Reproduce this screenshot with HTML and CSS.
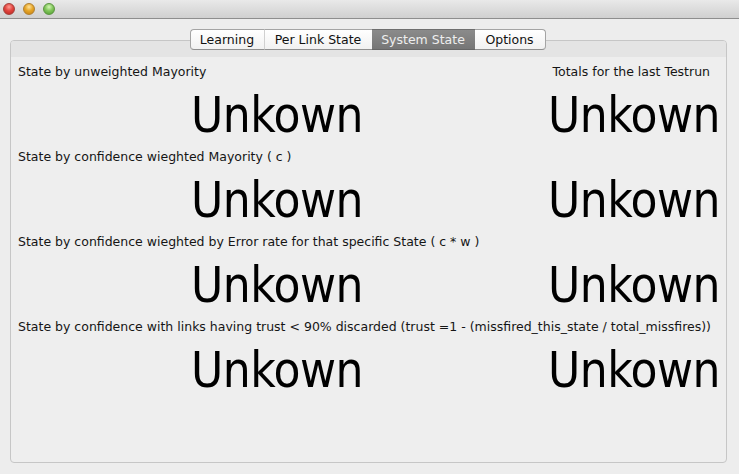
FILE: index.html
```html
<!DOCTYPE html>
<html>
<head>
<meta charset="utf-8">
<link rel="stylesheet" href="styles.css">
</head>
<body>
<div class="titlebar">
  <span class="light red"></span>
  <span class="light yellow"></span>
  <span class="light green"></span>
</div>
<div class="window">
  <div class="tabs">
    <div class="tab first">Learning</div>
    <div class="tab sep">Per Link State</div>
    <div class="tab selected">System State</div>
    <div class="tab last">Options</div>
  </div>
  <div class="panel">
    <div class="band"></div>
    <div class="content">
      <div class="label">State by unweighted Mayority</div>
      <div class="label right">Totals for the last Testrun</div>
      <div class="big left">Unkown</div>
      <div class="big">Unkown</div>

      <div class="label full">State by confidence wieghted Mayority ( c )</div>
      <div class="big left">Unkown</div>
      <div class="big">Unkown</div>

      <div class="label full">State by confidence wieghted by Error rate for that specific State ( c * w )</div>
      <div class="big left">Unkown</div>
      <div class="big">Unkown</div>

      <div class="label full">State by confidence with links having trust &lt; 90% discarded (trust =1 - (missfired_this_state / total_missfires))</div>
      <div class="big left">Unkown</div>
      <div class="big">Unkown</div>
    </div>
  </div>
</div>
</body>
</html>
```

FILE: styles.css
```css
html, body {
  margin: 0;
  padding: 0;
}
body {
  width: 739px;
  height: 474px;
  background: #ededed;
  font-family: "DejaVu Sans", sans-serif;
  color: #111;
  overflow: hidden;
}
.titlebar {
  height: 18px;
  background: linear-gradient(#e9e9e9, #d0d0d0);
  border-bottom: 1px solid #8e8e8e;
  display: flex;
  align-items: center;
  gap: 8px;
  padding-left: 3px;
}
.light {
  width: 12px;
  height: 12px;
  border-radius: 50%;
  box-sizing: border-box;
}
.red {
  background: radial-gradient(circle at 50% 30%, #ff9a92 0%, #e2453f 45%, #b8241f 100%);
  border: 1px solid #a3403a;
}
.yellow {
  background: radial-gradient(circle at 50% 30%, #ffe39a 0%, #e6a628 45%, #c27d10 100%);
  border: 1px solid #b08030;
}
.green {
  background: radial-gradient(circle at 50% 30%, #d4f7b4 0%, #82c65c 45%, #4e9a2e 100%);
  border: 1px solid #5b9440;
}
.window {
  display: flex;
  flex-direction: column;
  padding: 10px 12px 0 10px;
}
.tabs {
  display: flex;
  align-self: center;
  margin-left: -2px;
  height: 21px;
  position: relative;
  z-index: 1;
  font-size: 12.5px;
}
.tab {
  display: flex;
  align-items: center;
  justify-content: center;
  box-sizing: border-box;
  height: 21px;
  background: linear-gradient(#ffffff, #f1f1f1);
  border-top: 1px solid #a4a4a4;
  border-bottom: 1px solid #8f8f8f;
  color: #111;
}
.tab.first {
  width: 74px;
  border-left: 1px solid #a4a4a4;
  border-radius: 4px 0 0 4px;
}
.tab.sep {
  width: 108px;
  border-left: 1px solid #d0d0d0;
}
.tab.selected {
  width: 103px;
  background: linear-gradient(#8b8b8b, #767676);
  border-top-color: #6e6e6e;
  border-bottom-color: #666;
  color: #eeeeee;
}
.tab.last {
  width: 71px;
  border-right: 1px solid #a4a4a4;
  border-radius: 0 4px 4px 0;
}
.panel {
  margin-top: -10px;
  height: 423px;
  box-sizing: border-box;
  border: 1px solid #c6c6c6;
  border-radius: 4px;
  background: #eeeeee;
  display: flex;
  flex-direction: column;
}
.band {
  height: 16px;
  background: #e4e4e4;
  border-radius: 3px 3px 0 0;
}
.content {
  display: grid;
  grid-template-columns: 1fr 1fr;
  padding: 7px 6px 0 7px;
}
.label {
  font-size: 12.5px;
  line-height: 16px;
  white-space: nowrap;
  color: #151515;
}
.label.right {
  text-align: right;
  padding-right: 10px;
}
.label.full {
  grid-column: 1 / span 2;
}
.big {
  font-family: "DejaVu Sans Condensed", "DejaVu Sans", sans-serif;
  font-stretch: condensed;
  font-size: 49px;
  letter-spacing: -0.5px;
  line-height: 66px;
  padding-top: 3px;
  text-align: right;
  color: #000;
}
.big.left {
  padding-right: 6px;
}
```
